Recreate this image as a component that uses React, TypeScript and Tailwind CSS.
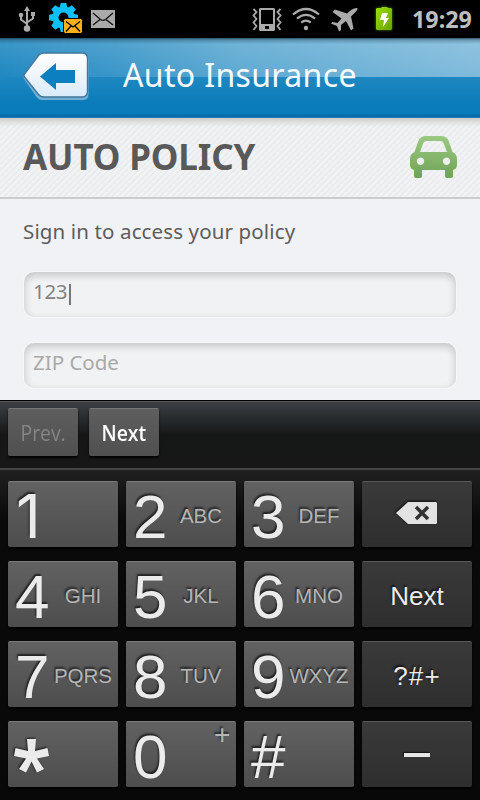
import React from "react";

const humanist = "font-['Noto_Sans','Open_Sans',sans-serif]";

function UsbIcon() {
  return (
    <svg className="ml-[18px] mt-[6px] shrink-0" width="18" height="26" viewBox="0 0 18 26" fill="none" stroke="#aaa" strokeWidth="2">
      <path d="M9 4v18M3 9v4.5l6 4.5M15 9v3.500l-6 4" />
      <path d="M9 0l3 5H6zM13 6h4v4h-4z" fill="#aaa" stroke="none" />
      <circle cx="3" cy="9" r="2.3" fill="#aaa" stroke="none" />
      <circle cx="9" cy="22.500" r="3.200" fill="#aaa" stroke="none" />
    </svg>
  );
}

function GearMailIcon() {
  const teeth = [0, 45, 90, 135, 180, 225, 270, 315];
  return (
    <svg className="ml-[13px] mt-[3px] shrink-0" width="34" height="31" viewBox="0 0 34 31">
      <g fill="#0cc0fb">
        {teeth.map((a) => (
          <path key={a} d="M10.700 5L11.700 0h5.600l1 5z" transform={`rotate(${a} 14.500 14.500)`} />
        ))}
        <circle cx="14.500" cy="14.500" r="11" />
      </g>
      <circle cx="14.500" cy="14.500" r="5" fill="#000" />
      <rect x="14.500" y="15.500" width="19" height="15" rx="2" fill="#fcb017" stroke="#000" />
      <path d="M17 18.500l7 5.500 7-5.500M17 28.500l5-5.500M31 28.500l-5-5.500" fill="none" stroke="#000" strokeWidth="1.300" />
    </svg>
  );
}

function MailIcon() {
  return (
    <svg className="ml-[8px] mt-[10px] shrink-0" width="24" height="18" viewBox="0 0 24 18">
      <path fill="#aaa" d="M0 0h24v18H0z" />
      <path d="M2 3l7.500 6.500q2.500 1.600 5 0L22 3M2 15l7-5.500M22 15l-7-5.500" fill="none" stroke="#111" strokeWidth="1.300" />
    </svg>
  );
}

function VibrateIcon() {
  return (
    <svg className="mt-[8px] shrink-0" width="30" height="24" viewBox="0 0 30 24" fill="none" stroke="#aaa">
      <path fill="#aaa" stroke="none" fillRule="evenodd" d="M8 0h14l1 1v21l-1 1H8l-1-1V1zM9 2v14h12V2zM13 18v3h4v-3z" />
      <path strokeWidth="1.800" d="M1.500 1l3 3-3 3.500 3 3.500-3 3.500 3 3.500-3 4M28.500 1l-3 3 3 3.500-3 3.500 3 3.500-3 3.500 3 4" />
    </svg>
  );
}

function WifiIcon() {
  return (
    <svg className="ml-[10px] mt-[7px] shrink-0" width="28" height="24" viewBox="0 0 28 24" fill="none" stroke="#aaa" strokeWidth="2.200">
      <path d="M1 7.500Q14-3.500 27 7.500M5 11.700q9-7.500 18 0M9.200 15.700q4.800-4 9.600 0" />
      <circle cx="14" cy="21" r="2.200" fill="#aaa" stroke="none" />
    </svg>
  );
}

function PlaneIcon() {
  return (
    <svg className="ml-[11px] mt-[8px] shrink-0" width="28" height="24" viewBox="0 0 28 24" fill="#aaa">
      <path d="M26.500 0Q22 0 19 3l-3 2.500L4 1.500 1.500 4l9 6.500-4 4.500-5-1L0 15.500l6 2.500 2 5.500 2-1.500v-5l5-4 5 9.500 2.500-2-2.500-12 3.500-3.500q3.500-3 3-5z" />
    </svg>
  );
}

function BatteryIcon() {
  return (
    <svg className="ml-[13px] mt-[3px] shrink-0" width="24" height="32" viewBox="0 0 24 32">
      <defs>
        <linearGradient id="charge" x2="1" y2="1">
          <stop stopColor="#9be000" />
          <stop offset="1" stopColor="#69a000" />
        </linearGradient>
        <filter id="glow" x="-50%" y="-50%" width="200%" height="200%">
          <feGaussianBlur stdDeviation="1.500" />
        </filter>
      </defs>
      <path d="M4 5h5V4h6v1h5v22H4z" fill="#4a7d00" filter="url(#glow)" />
      <path d="M5 5h4l1-1h5l1 1h3l1 1v20l-1 1H5l-1-1V6z" fill="url(#charge)" />
      <path d="M10 10h6l-2 5h3l-6 9 1-7H8z" fill="#fff" />
    </svg>
  );
}

function StatusBar() {
  return (
    <div className="flex h-[38px] items-start bg-black">
      <UsbIcon />
      <GearMailIcon />
      <MailIcon />
      <div className="flex-1" />
      <VibrateIcon />
      <WifiIcon />
      <PlaneIcon />
      <BatteryIcon />
      <span className={`${humanist} ml-[16px] w-[68px] text-[23.3px] leading-[39px] font-bold text-[#bebebe]`}>19:29</span>
    </div>
  );
}

function BackButton() {
  return (
    <svg className="ml-[22px] mt-[14px] shrink-0" width="68" height="49" viewBox="0 0 68 49">
      <defs>
        <linearGradient id="backFace" x2="0" y2="1">
          <stop stopColor="#fff" />
          <stop offset=".5" stopColor="#eef5fc" />
          <stop offset="1" stopColor="#d8eafa" />
        </linearGradient>
      </defs>
      <path d="M18.500 3H61q5.500 0 5.500 5.500V42q0 6-5.500 6H20q-3 0-5-2.500L2 27q-1-2 0-4L13.500 6q2-3 5-3z" fill="#8dbbd8" opacity=".8" />
      <path d="M21.500 1H60q5.500 0 5.500 5.500V39q0 6-5.500 6H22q-3.500 0-5.500-2.500L2.500 25q-1.200-1.500 0-3L16.500 3.500q2-2.500 5-2.500z" fill="url(#backFace)" stroke="#42779c" strokeWidth="1.400" />
      <path d="M18 24.500L34 11v7h19v13H34v7z" fill="#0b7fbf" />
    </svg>
  );
}

function Header() {
  return (
    <div className="h-20 bg-[linear-gradient(180deg,rgba(20,50,70,.75)_0px,rgba(20,50,70,.3)_2px,rgba(20,50,70,0)_6px),linear-gradient(90deg,rgba(255,255,255,0)_0%,rgba(255,255,255,.12)_25%,rgba(255,255,255,.28)_50%,rgba(255,255,255,.43)_100%),linear-gradient(180deg,#3d98c9_0px,#0a7cbb_66px,#0a7cbb_76px,#0a6dab_77px,#0a6dab_79px,#3f8fbd_80px)] bg-[length:100%_39px,100%_39px,100%_100%] bg-no-repeat">
      <div className="flex items-start">
        <BackButton />
        <h1 className={`${humanist} ml-[33px] text-[32px] leading-[73px] tracking-[0.35px] whitespace-nowrap text-[#f8fbfd]`}>Auto Insurance</h1>
      </div>
    </div>
  );
}

function CarIcon() {
  return (
    <svg className="mr-[23px] mt-[18px]" width="47" height="42" viewBox="0 0 47 42">
      <defs>
        <linearGradient id="carBody" x2="0" y2="1">
          <stop stopColor="#9cc982" />
          <stop offset="1" stopColor="#6ea356" />
        </linearGradient>
      </defs>
      <path
        fill="url(#carBody)"
        fillRule="evenodd"
        d="M16 0h15q5.500 0 7.500 4.500L42.500 16q4.500 2 4.500 7v6q0 4-4 5v6q0 2-2 2h-4q-2 0-2-2v-6H12v6q0 2-2 2H6q-2 0-2-2v-6q-4-1-4-5v-6q0-5 4.500-7L8.500 4.500Q10.500 0 16 0zM16.500 5q-2.500 0-3.200 2L10 16h27L33.500 7q-.7-2-3-2zM10.500 21.500a3.700 3.700 0 1 0 .01 0zM36.500 21.500a3.700 3.700 0 1 0 .01 0z"
      />
    </svg>
  );
}

function PolicyForm() {
  const field =
    "h-[45px] rounded-[10px] bg-[#f1f2f4] shadow-[inset_0_3px_7px_1px_rgba(0,0,0,.17),0_0_0_1px_#f6f7f8]";
  return (
    <div className="h-[282px] bg-[#f1f2f5]">
      <div className="flex h-[81px] items-start justify-between border-b-2 border-[#cbccce] bg-[linear-gradient(180deg,rgba(200,200,196,.9)_0px,rgba(220,220,218,.8)_4px,rgba(240,241,243,0)_9px),repeating-linear-gradient(135deg,#f1f2f4_0px,#f1f2f4_2.4px,#e5e6e8_3.2px,#f1f2f4_4.24px)]">
        <h2 className={`${humanist} ml-[23px] text-[35px] leading-[78px] font-bold tracking-[-0.15px] whitespace-nowrap text-[#595959]`}>AUTO POLICY</h2>
        <CarIcon />
      </div>
      <p className={`${humanist} ml-[23px] h-[73px] text-[20.5px] leading-[65px] tracking-[0.13px] whitespace-nowrap text-[#5c5c5c]`}>Sign in to access your policy</p>
      <div className="mx-6 flex flex-col gap-[26px]">
        <div className={`${field} ${humanist} flex items-start pl-[9px] text-[20.5px] leading-[38px] text-[#828282]`}>
          <span className="w-[36px] tracking-[-0.3px]">123</span>
          <span className="mt-[12px] h-[21px] w-[2px] bg-[#777]" />
        </div>
        <div className={`${field} ${humanist} pl-[9px] text-[20.5px] leading-[39px] text-[#a9a9a9]`}>ZIP Code</div>
      </div>
    </div>
  );
}

const faceShadow = "shadow-[inset_0_2px_0_-1px_rgba(255,255,255,.16),0_2px_2px_rgba(0,0,0,.9)]";
const emboss = "[text-shadow:-1px_-2px_2px_rgba(0,0,0,.65)]";

function ToolbarButton({ label, enabled }: { label: string; enabled: boolean }) {
  return (
    <div className={`${faceShadow} flex h-12 w-[70px] justify-center rounded-[2px] bg-linear-to-b from-[#5e5e5e] to-[#505050]`}>
      <span className={`origin-center scale-x-90 font-['Open_Sans','Noto_Sans',sans-serif] text-[21.5px] leading-[50px] ${enabled ? "font-semibold text-white" : "font-medium text-[#858585]"}`}>{label}</span>
    </div>
  );
}

function DigitKey({ digit, letters }: { digit: string; letters?: string }) {
  return (
    <div className={`${faceShadow} ${emboss} flex h-[66px] items-start rounded-[2px] bg-linear-to-b from-[#626262] to-[#4d4d4d]`}>
      {digit === "*" ? (
        <svg className="ml-[6px] mt-[17px] drop-shadow-[-1px_-1px_1px_rgba(0,0,0,.7)]" width="35" height="35" viewBox="0 0 35 35" fill="#ebebeb">
          <path d="M13 1h9l-1 12 12.500-3L35 18l-12 2.500 7 10.500-7 3.500-5.500-11-5.500 11L5 31l7-10.500L0 18l1.500-8L14 13z" />
        </svg>
      ) : digit === "1" ? (
        <span className="w-[43px] pl-[8px] font-['Inter',sans-serif] text-[61px] leading-[70px] text-[#ebebeb]">1</span>
      ) : (
        <span className="w-[43px] pl-[7px] text-[62px] leading-[72px] text-[#ebebeb]">{digit}</span>
      )}
      {letters && digit !== "0" && (
        <span className="w-[64px] text-center text-[20.5px] leading-[70px] text-[#b5b5b5]">{letters}</span>
      )}
      {digit === "0" && <span className="ml-[45px] text-[28px] leading-[27px] text-[#b5b5b5]">{letters}</span>}
    </div>
  );
}

function ActionKey({ children }: { children: React.ReactNode }) {
  return (
    <div className={`${faceShadow} ${emboss} flex h-[66px] justify-center rounded-[2px] bg-linear-to-b from-[#3a3a3a] to-[#2e2e2e] text-[26px] leading-[70px] text-[#ebebeb]`}>
      {children}
    </div>
  );
}

function Keyboard() {
  return (
    <div className="h-[400px] border-t border-black bg-[#080808] font-['Liberation_Sans',Arial,sans-serif]">
      <div className="flex h-[67px] gap-[11px] border-t border-[#55575a] bg-[linear-gradient(180deg,#3c4044_0%,#2b2f32_20%,#151717_50%,#171717_100%)] pt-[6px] pl-2">
        <ToolbarButton label="Prev." enabled={false} />
        <ToolbarButton label="Next" enabled />
      </div>
      <div className="grid h-[332px] grid-cols-4 content-start gap-x-2 gap-y-[14px] border-t-2 border-[#444] bg-[linear-gradient(180deg,#202020_0px,#0a0a0a_50px,#080808_100%)] px-2 pt-[11px]">
        <DigitKey digit="1" />
        <DigitKey digit="2" letters="ABC" />
        <DigitKey digit="3" letters="DEF" />
        <ActionKey>
          <svg className="mt-[20px] drop-shadow-[-1px_-1px_1px_#111]" width="42" height="24" viewBox="0 0 42 24">
            <path fill="#e2e2e2" d="M0 12L12 1h28l1 1v20l-1 1H12z" />
            <path d="M20 6l12 12M32 6L20 18" stroke="#333" strokeWidth="3.500" />
          </svg>
        </ActionKey>
        <DigitKey digit="4" letters="GHI" />
        <DigitKey digit="5" letters="JKL" />
        <DigitKey digit="6" letters="MNO" />
        <ActionKey>Next</ActionKey>
        <DigitKey digit="7" letters="PQRS" />
        <DigitKey digit="8" letters="TUV" />
        <DigitKey digit="9" letters="WXYZ" />
        <ActionKey>
          <span className="tracking-[1.2px]">?#+</span>
        </ActionKey>
        <DigitKey digit="*" />
        <DigitKey digit="0" letters="+" />
        <DigitKey digit="#" />
        <ActionKey>
          <span className="mt-[32px] h-[4px] w-[26px] bg-[#e6e6e6] shadow-[-1px_-1px_1px_#111]" />
        </ActionKey>
      </div>
    </div>
  );
}

export default function App() {
  return (
    <div className="h-[800px] w-[480px] overflow-hidden bg-black">
      <StatusBar />
      <Header />
      <PolicyForm />
      <Keyboard />
    </div>
  );
}
